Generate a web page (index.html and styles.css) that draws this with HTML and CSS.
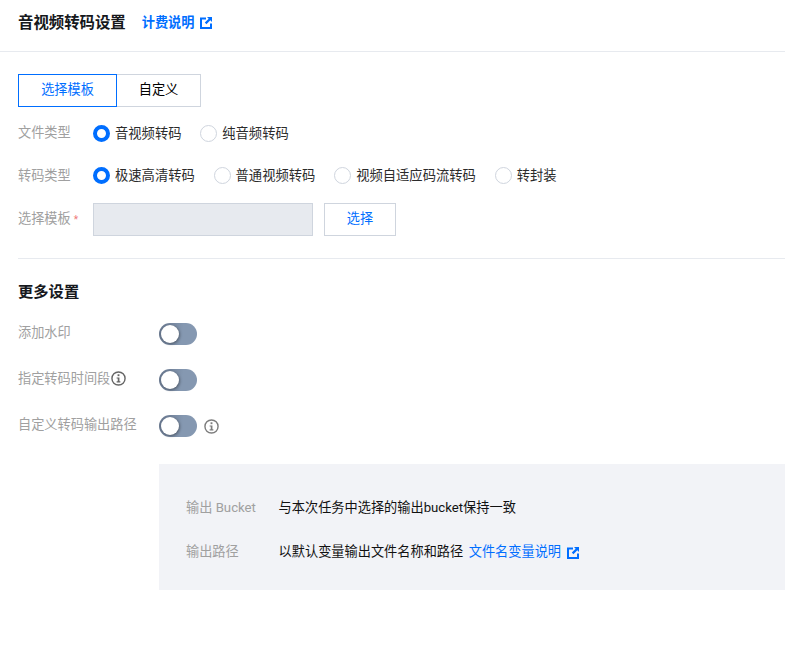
FILE: index.html
```html
<!DOCTYPE html>
<html lang="zh-CN">
<head>
<meta charset="utf-8">
<title>音视频转码设置</title>
<link rel="stylesheet" href="styles.css">
</head>
<body>
<svg class="defs" width="0" height="0" aria-hidden="true">
  <symbol id="ext" viewBox="0 0 12 12">
    <path d="M0 0.500h6v2H2v7.500h8V6.500h2V12H0z" fill="currentColor"/>
    <path d="M7 0h5v5l-1.700-1.700L6.400 7.200 4.800 5.600l3.900-3.900z" fill="currentColor"/>
  </symbol>
  <symbol id="info" viewBox="0 0 16 16">
    <circle cx="8" cy="8" r="7" fill="none" stroke="currentColor" stroke-width="1.500"/>
    <rect x="7" y="3.500" width="2" height="2" fill="currentColor"/>
    <path d="M6 6.800H9v4.200h1v1.300H6v-1.300h1.200V8.100H6z" fill="currentColor"/>
  </symbol>
</svg>
<header class="header">
  <h1 class="title">音视频转码设置</h1>
  <a class="link link-bold">计费说明<svg class="ext"><use href="#ext"/></svg></a>
</header>
<main class="main">
  <div class="tabs">
    <div class="tab tab-active">选择模板</div>
    <div class="tab">自定义</div>
  </div>
  <div class="row row-type">
    <div class="label">文件类型</div>
    <div class="radios">
      <label class="radio"><span class="dot dot-on"></span>音视频转码</label>
      <label class="radio"><span class="dot"></span>纯音频转码</label>
    </div>
  </div>
  <div class="row row-type2">
    <div class="label label-low">转码类型</div>
    <div class="radios">
      <label class="radio"><span class="dot dot-on"></span>极速高清转码</label>
      <label class="radio"><span class="dot"></span>普通视频转码</label>
      <label class="radio"><span class="dot"></span>视频自适应码流转码</label>
      <label class="radio"><span class="dot"></span>转封装</label>
    </div>
  </div>
  <div class="row row-tpl">
    <div class="label">选择模板<span class="req">*</span></div>
    <div class="input"></div>
    <div class="btn">选择</div>
  </div>
  <hr class="divider">
  <h2 class="subtitle">更多设置</h2>
  <div class="row row-sw">
    <div class="label label-sw">添加水印</div>
    <span class="switch"><span class="knob"></span></span>
  </div>
  <div class="row row-sw">
    <div class="label label-sw">指定转码时间段<svg class="info info-tight"><use href="#info"/></svg></div>
    <span class="switch"><span class="knob"></span></span>
  </div>
  <div class="row row-sw">
    <div class="label label-sw">自定义转码输出路径</div>
    <span class="switch"><span class="knob"></span></span>
    <svg class="info info-gap"><use href="#info"/></svg>
  </div>
  <section class="panel">
    <div class="kv">
      <div class="k">输出 Bucket</div>
      <div class="v">与本次任务中选择的输出bucket保持一致</div>
    </div>
    <div class="kv">
      <div class="k">输出路径</div>
      <div class="v">以默认变量输出文件名称和路径<a class="link link-in">文件名变量说明<svg class="ext ext-in"><use href="#ext"/></svg></a></div>
    </div>
  </section>
</main>
</body>
</html>
```
FILE: styles.css
```css
* { box-sizing: border-box; }
html, body { margin: 0; padding: 0; }
body {
  background: #fff;
  color: #000;
  font-family: Roboto, "Noto Sans CJK SC", sans-serif;
  font-size: 13.2px;
  line-height: 20px;
  overflow: hidden;
}
.defs { position: absolute; }
.header {
  height: 52px;
  padding: 0 18px 5px;
  display: flex;
  align-items: center;
  border-bottom: 1px solid #e7eaef;
}
.title { margin: 0; font-size: 15.4px; line-height: 22px; font-weight: 700; color: #16181c; }
.link { color: #006eff; text-decoration: none; display: inline-flex; align-items: center; }
.link-bold { margin-left: 16px; font-weight: 700; }
.ext { width: 12px; height: 12px; margin-left: 5px; }
.main { padding: 22px 0 0 18px; }
.tabs { display: flex; height: 33px; }
.tab {
  width: 84px;
  padding-bottom: 2px;
  display: flex;
  align-items: center;
  justify-content: center;
  border: 1px solid #cfd5de;
  border-left: 0;
}
.tab-active { width: 99px; border: 1px solid #006eff; color: #006eff; }
.row { display: flex; align-items: center; }
.row-type { margin-top: 14px; height: 24px; }
.row-type2 { margin-top: 18px; height: 24px; }
.row-tpl { margin-top: 16px; height: 33px; }
.label { width: 75px; color: #a0a0a0; white-space: nowrap; }
.label-low { padding-top: 2px; }
.radios { display: flex; gap: 18.8px; font-size: 13.3px; }
.radio { display: flex; align-items: center; color: #2b2b2b; white-space: nowrap; padding-top: 2px; }
.dot {
  width: 17px;
  height: 17px;
  border-radius: 50%;
  border: 1px solid #cfd5de;
  background: #fff;
  margin-right: 5px;
  margin-bottom: 2px;
}
.dot-on { border: 4.5px solid #006eff; }
.req { color: #ee7777; margin-left: 3px; font-size: 10px; }
.input { width: 220px; height: 33px; background: #e7eaef; border: 1px solid #cfd5de; }
.btn {
  width: 72px;
  height: 33px;
  margin-left: 11px;
  padding-bottom: 2px;
  border: 1px solid #cfd5de;
  color: #006eff;
  display: flex;
  align-items: center;
  justify-content: center;
}
.divider { margin: 22px 0 0; border: 0; border-top: 1px solid #e7eaef; }
.subtitle { margin: 23px 0 0; font-size: 15.3px; line-height: 20px; font-weight: 700; color: #16181c; }
.row-sw { height: 22px; margin-top: 24px; }
.subtitle + .row-sw { margin-top: 21px; }
.label-sw { width: 141px; padding-bottom: 2px; }
.switch {
  position: relative;
  width: 38px;
  height: 22px;
  border-radius: 11px;
  background: linear-gradient(100deg, #66758c 0, #8598b1 60%);
  display: block;
}
.knob {
  position: absolute;
  left: 2px;
  top: 2px;
  width: 18px;
  height: 18px;
  border-radius: 50%;
  background: #fff;
  box-shadow: 1px 1px 3px rgba(0, 0, 0, .35);
}
.info { width: 15px; height: 15px; color: #666; }
.info-tight { vertical-align: -3px; margin-left: 1px; }
.info-gap { margin-left: 7px; color: #7d7d7d; }
.panel {
  margin: 27px 0 0 141px;
  height: 126px;
  background: #f2f3f7;
  padding: 33px 27px 0;
}
.kv { display: flex; align-items: center; height: 22px; margin-bottom: 22px; white-space: nowrap; }
.k { width: 92.6px; color: #a0a0a0; }
.v { color: #111; display: flex; align-items: center; }
.link-in { margin-left: 5.5px; }
.ext-in { margin-top: 2px; margin-left: 5.5px; }
```
